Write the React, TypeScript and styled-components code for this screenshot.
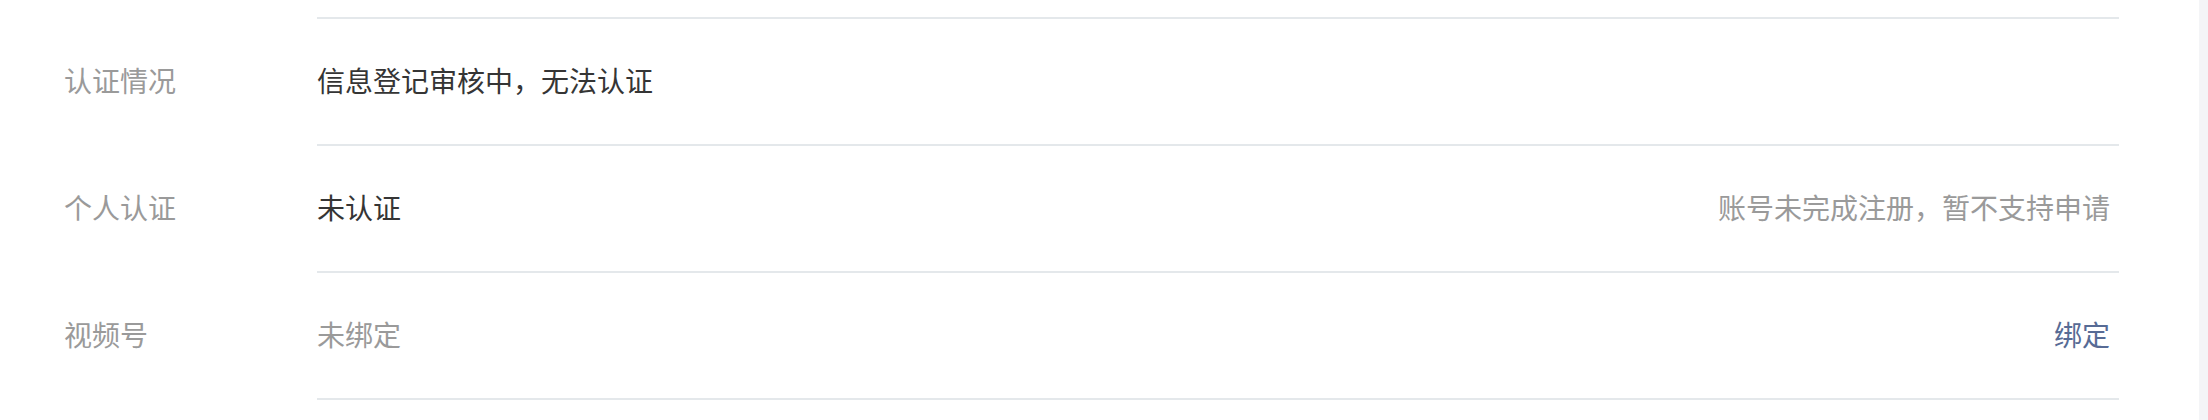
import React from 'react'
import styled, { createGlobalStyle } from 'styled-components'

const GlobalStyle = createGlobalStyle`
  html, body {
    margin: 0;
    padding: 0;
    background: #fff;
  }
  body {
    font-family: "PingFang SC", "Noto Sans CJK SC", "Liberation Sans", sans-serif;
    -webkit-font-smoothing: antialiased;
  }
`

const Page = styled.div`
  display: flex;
  width: 2208px;
  height: 420px;
  overflow: hidden;
`

const Main = styled.div`
  flex: 1;
  padding: 0 80px 0 64px;
`

const Track = styled.div`
  width: 9px;
  background: #f4f5f7;
`

const PrevEdge = styled.div`
  margin-left: 253px;
  height: 17px;
  border-bottom: 2px solid #e4e8eb;
`

const Row = styled.div`
  display: flex;
`

const Label = styled.div`
  width: 253px;
  flex-shrink: 0;
  display: flex;
  align-items: center;
  padding-bottom: 6px;
  font-size: 28px;
  color: #9a9a9a;
`

const Body = styled.div`
  flex: 1;
  height: 127px;
  box-sizing: border-box;
  display: flex;
  align-items: center;
  justify-content: space-between;
  padding: 0 9px 4px 0;
  border-bottom: 2px solid #e4e8eb;
  font-size: 28px;
`

const Value = styled.span<{ muted?: boolean }>`
  color: ${({ muted }) => (muted ? '#9a9a9a' : '#353535')};
`

const Tip = styled.span`
  color: #9a9a9a;
`

const Action = styled.a`
  color: #576b95;
  text-decoration: none;
  cursor: pointer;
`

type Item = {
  label: string
  value: string
  muted?: boolean
  tip?: string
  action?: string
}

const items: Item[] = [
  { label: '认证情况', value: '信息登记审核中，无法认证' },
  { label: '个人认证', value: '未认证', tip: '账号未完成注册，暂不支持申请' },
  { label: '视频号', value: '未绑定', muted: true, action: '绑定' },
]

export default function App() {
  return (
    <>
      <GlobalStyle />
      <Page>
        <Main>
          <PrevEdge />
          {items.map((item) => (
            <Row key={item.label}>
              <Label>{item.label}</Label>
              <Body>
                <Value muted={item.muted}>{item.value}</Value>
                {item.tip && <Tip>{item.tip}</Tip>}
                {item.action && <Action>{item.action}</Action>}
              </Body>
            </Row>
          ))}
        </Main>
        <Track />
      </Page>
    </>
  )
}
